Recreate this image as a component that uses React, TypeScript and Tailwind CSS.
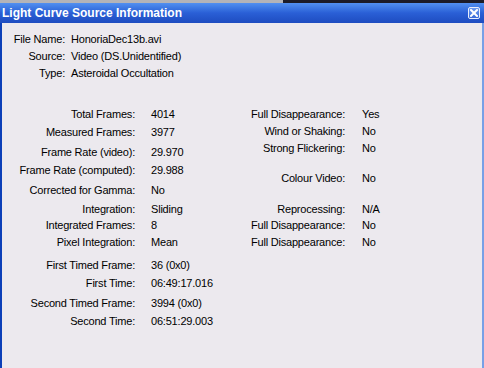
import React from 'react';

type Row = { label: string; value: string; mt: string };

const leftRows: Row[] = [
  { label: 'Total Frames:', value: '4014', mt: 'mt-0' },
  { label: 'Measured Frames:', value: '3977', mt: 'mt-[2px]' },
  { label: 'Frame Rate (video):', value: '29.970', mt: 'mt-[4px]' },
  { label: 'Frame Rate (computed):', value: '29.988', mt: 'mt-[2px]' },
  { label: 'Corrected for Gamma:', value: 'No', mt: 'mt-[4px]' },
  { label: 'Integration:', value: 'Sliding', mt: 'mt-[3px]' },
  { label: 'Integrated Frames:', value: '8', mt: 'mt-0' },
  { label: 'Pixel Integration:', value: 'Mean', mt: 'mt-[1px]' },
  { label: 'First Timed Frame:', value: '36 (0x0)', mt: 'mt-[7px]' },
  { label: 'First Time:', value: '06:49:17.016', mt: 'mt-[2px]' },
  { label: 'Second Timed Frame:', value: '3994 (0x0)', mt: 'mt-[4px]' },
  { label: 'Second Time:', value: '06:51:29.003', mt: 'mt-[2px]' },
];

const rightRows: Row[] = [
  { label: 'Full Disappearance:', value: 'Yes', mt: 'mt-0' },
  { label: 'Wind or Shaking:', value: 'No', mt: 'mt-[1px]' },
  { label: 'Strong Flickering:', value: 'No', mt: 'mt-[1px]' },
  { label: 'Colour Video:', value: 'No', mt: 'mt-[14px]' },
  { label: 'Reprocessing:', value: 'N/A', mt: 'mt-[15px]' },
  { label: 'Full Disappearance:', value: 'No', mt: 'mt-0' },
  { label: 'Full Disappearance:', value: 'No', mt: 'mt-[1px]' },
];

const topRows = [
  { label: 'File Name:', value: 'HonoriaDec13b.avi' },
  { label: 'Source:', value: 'Video (DS.Unidentified)' },
  { label: 'Type:', value: 'Asteroidal Occultation' },
];

const App = () => {
  return (
    <div
      className="w-[484px] h-[368px] flex flex-col bg-[#ECE9EE] overflow-hidden text-black"
      style={{ fontFamily: '"Liberation Sans", Arial, sans-serif' }}
    >
      {/* strip of whatever is behind the window */}
      <div className="h-[3px] flex">
        <div className="w-[283px] bg-[#b4b4b8]" />
        <div className="flex-1 bg-[#1c1c28]" />
      </div>

      {/* title bar */}
      <div className="h-[20px] flex items-center justify-between pl-[2px] pr-[4px] bg-gradient-to-b from-[#5290f0] via-[#2a5fd6] to-[#1e4cc0]">
        <span className="text-white font-bold text-[12px] leading-none">
          Light Curve Source Information
        </span>
        <div className="w-[12px] h-[12px] border border-[#e8eefc] rounded-[2px] bg-gradient-to-b from-[#6d9bf0] to-[#3a6ad8] flex items-center justify-center">
          <svg width="8" height="8" viewBox="0 0 8 8">
            <path d="M1 1 L7 7 M7 1 L1 7" stroke="white" strokeWidth="2" strokeLinecap="square" />
          </svg>
        </div>
      </div>

      {/* body */}
      <div className="flex-1 border-l-2 border-l-[#0c3fb8] border-r-2 border-r-[#78a0e6] pt-[8px] text-[11px] tracking-[-0.2px]">
        <div className="flex flex-col">
          {topRows.map((r) => (
            <div key={r.label} className="flex h-[17px] leading-[17px]">
              <span className="w-[63px] text-right">{r.label}</span>
              <span className="ml-[6px]">{r.value}</span>
            </div>
          ))}
        </div>

        <div className="flex mt-[24px]">
          <div className="w-[240px] flex flex-col">
            {leftRows.map((r) => (
              <div key={r.label} className={`flex h-[16px] leading-[16px] ${r.mt}`}>
                <span className="w-[133px] text-right whitespace-nowrap">{r.label}</span>
                <span className="ml-[16px] whitespace-nowrap">{r.value}</span>
              </div>
            ))}
          </div>
          <div className="flex flex-col">
            {rightRows.map((r, i) => (
              <div key={i} className={`flex h-[16px] leading-[16px] ${r.mt}`}>
                <span className="w-[103px] text-right whitespace-nowrap">{r.label}</span>
                <span className="ml-[17px] whitespace-nowrap">{r.value}</span>
              </div>
            ))}
          </div>
        </div>
      </div>
    </div>
  );
};

export default App;
